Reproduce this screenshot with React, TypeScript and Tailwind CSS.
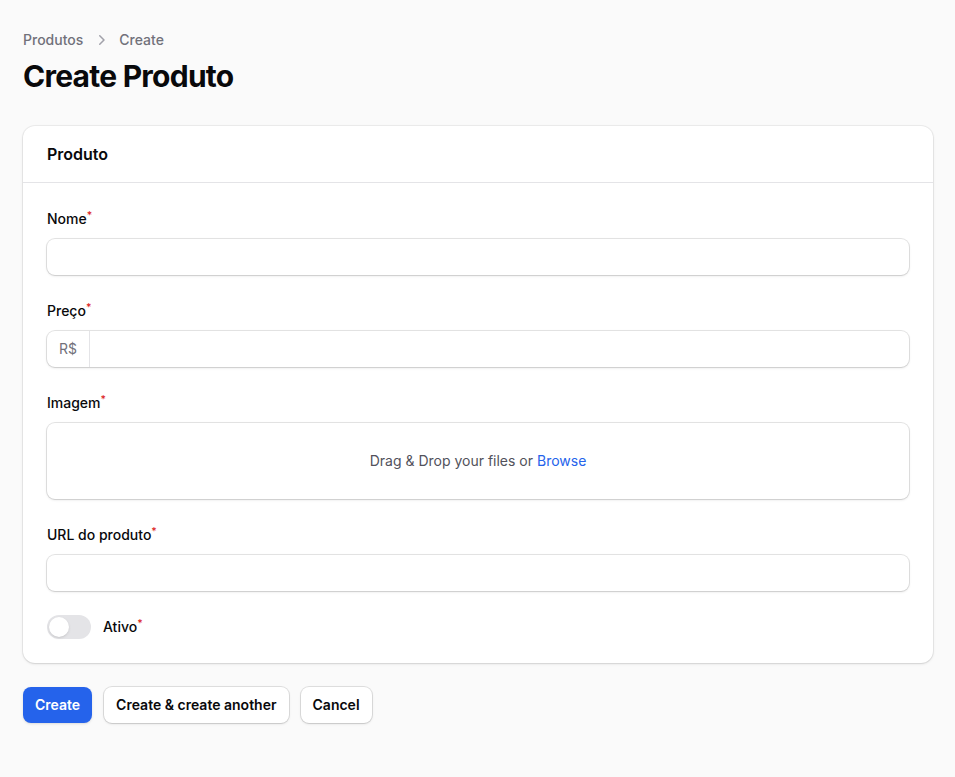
import React, { useState } from 'react';

const font = { fontFamily: 'Inter, "Noto Sans", sans-serif' };

const Label = ({ children }: { children: React.ReactNode }) => (
  <label className="text-sm font-medium leading-6 text-[#09090b]">
    {children}
    <sup className="font-medium text-[#dc2626]">*</sup>
  </label>
);

const TextInput = () => (
  <div className="flex h-9 rounded-lg bg-white shadow-sm ring-1 ring-black/10">
    <input className="w-full bg-transparent px-3 text-sm outline-none" />
  </div>
);

export default function App() {
  const [ativo, setAtivo] = useState(false);

  return (
    <div className="min-h-screen bg-[#fafafa]" style={font}>
      <div className="flex flex-col gap-y-8 pl-[23px] pr-[22px] pt-[30px] pb-8">
        <header className="flex flex-col gap-y-2">
          <nav className="flex items-center gap-x-2 text-sm font-medium text-[#71717a]">
            <span>Produtos</span>
            <svg viewBox="0 0 20 20" fill="currentColor" className="h-5 w-5 text-[#a1a1aa]">
              <path
                fillRule="evenodd"
                d="M8.22 5.22a.75.75 0 0 1 1.06 0l4.25 4.25a.75.75 0 0 1 0 1.06l-4.25 4.25a.75.75 0 0 1-1.06-1.06L11.94 10 8.22 6.28a.75.75 0 0 1 0-1.06Z"
                clipRule="evenodd"
              />
            </svg>
            <span>Create</span>
          </nav>
          <h1 className="text-3xl font-bold tracking-tight text-[#09090b]">Create Produto</h1>
        </header>

        <section className="rounded-xl bg-white shadow-sm ring-1 ring-black/5">
          <div className="px-6 py-4">
            <h3 className="text-base font-semibold leading-6 text-[#09090b]">Produto</h3>
          </div>
          <div className="flex flex-col gap-y-6 border-t border-[#e4e4e7] p-6">
            <div className="grid gap-y-2">
              <Label>Nome</Label>
              <TextInput />
            </div>

            <div className="grid gap-y-2">
              <Label>Preço</Label>
              <div className="flex h-9 rounded-lg bg-white shadow-sm ring-1 ring-black/10">
                <div className="flex w-[43px] shrink-0 items-center justify-center border-r border-[#e4e4e7] text-sm text-[#71717a]">
                  R$
                </div>
                <input className="w-full bg-transparent px-3 text-sm outline-none" />
              </div>
            </div>

            <div className="grid gap-y-2">
              <Label>Imagem</Label>
              <div className="flex h-[76px] items-center justify-center rounded-lg bg-white text-sm text-[#52525b] shadow-sm ring-1 ring-black/10">
                <span>
                  Drag &amp; Drop your files or <span className="text-[#2563eb]">Browse</span>
                </span>
              </div>
            </div>

            <div className="grid gap-y-2">
              <Label>URL do produto</Label>
              <TextInput />
            </div>

            <div className="flex items-center gap-x-3">
              <button
                onClick={() => setAtivo(!ativo)}
                className={`relative inline-flex h-6 w-11 shrink-0 rounded-full border-2 border-transparent ${ativo ? 'bg-[#2563eb]' : 'bg-[#e4e4e7]'}`}
              >
                <span
                  className={`pointer-events-none inline-block h-5 w-5 rounded-full bg-white shadow ring-0 transition ${ativo ? 'translate-x-5' : 'translate-x-0'}`}
                />
              </button>
              <Label>Ativo</Label>
            </div>
          </div>
        </section>

        <div className="-mt-2 flex gap-3">
          <button className="h-9 rounded-lg bg-[#2563eb] px-3 text-sm font-semibold text-white shadow-sm">
            Create
          </button>
          <button className="h-9 rounded-lg bg-white px-3 text-sm font-semibold text-[#09090b] shadow-sm ring-1 ring-black/10">
            Create &amp; create another
          </button>
          <button className="h-9 rounded-lg bg-white px-3 text-sm font-semibold text-[#09090b] shadow-sm ring-1 ring-black/10">
            Cancel
          </button>
        </div>
      </div>
    </div>
  );
}
